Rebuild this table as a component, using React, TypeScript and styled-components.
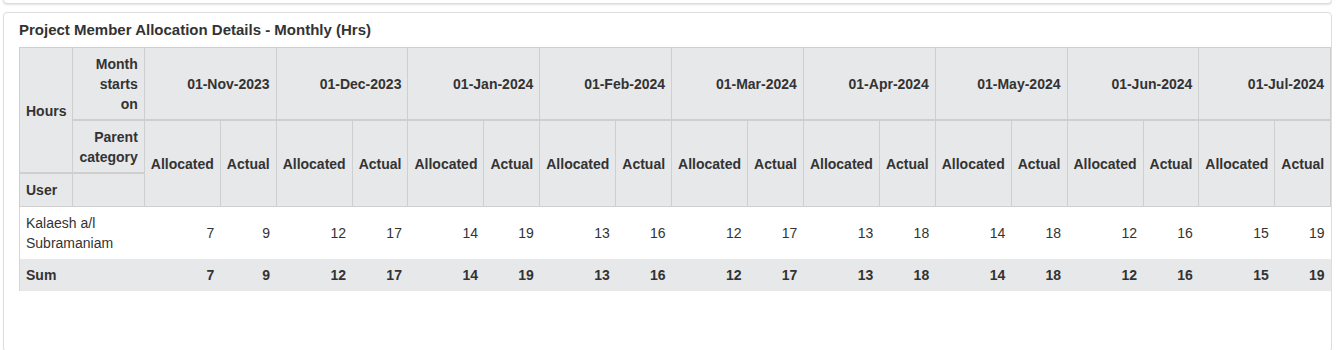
import React from "react";
import styled, { createGlobalStyle } from "styled-components";

const GlobalStyle = createGlobalStyle`
  html, body { margin: 0; padding: 0; background: #ffffff; }
  body {
    font-family: "Liberation Sans", Arial, Helvetica, sans-serif;
    font-size: 14px;
    line-height: 20px;
    color: #333333;
  }
`;

const Page = styled.div`
  width: 1329px;
  padding-left: 3px;
  height: 350px;
  overflow: hidden;
`;

const PrevCard = styled.div`
  height: 30px;
  margin-top: -28px;
  background: #ffffff;
  border: 1px solid #dddddd;
  border-radius: 4px;
  box-shadow: 0 1px 2px rgba(0, 0, 0, 0.12);
`;

const Card = styled.section`
  margin-top: 8px;
  background: #ffffff;
  border: 1px solid #dddddd;
  border-radius: 4px;
  box-shadow: 0 1px 1px rgba(0, 0, 0, 0.05);
  padding: 7px 15px 60px 15px;
  overflow: hidden;
`;

const Title = styled.h3`
  margin: 0 0 7px 0;
  font-size: 15px;
  line-height: 20px;
  font-weight: 700;
  color: #333333;
`;

const Table = styled.table`
  border-collapse: collapse;
  width: 100%;
  border-left: 1px solid #d6d6d6;
  font-size: 14px;
  line-height: 20px;
`;

const Th = styled.th<{ $align?: "left" | "right"; $thick?: boolean }>`
  background: #e7e8ea;
  border: 1px solid #cfcfcf;
  border-bottom-width: ${(p) => (p.$thick ? "2px" : "1px")};
  padding: 6px;
  padding-bottom: ${(p) => (p.$thick ? "5px" : "6px")};
  font-weight: 700;
  color: #333333;
  text-align: ${(p) => p.$align ?? "right"};
  vertical-align: middle;
`;

const Row = styled.tr<{ $total?: boolean }>`
  background: ${(p) => (p.$total ? "#e7e8ea" : "#ffffff")};
  font-weight: ${(p) => (p.$total ? 700 : 400)};
`;

const LabelCell = styled.td`
  padding: 6px;
  text-align: left;
  vertical-align: top;
`;

const NumCell = styled.td`
  padding: 6px;
  text-align: right;
  vertical-align: middle;
`;

type Month = { label: string; allocated: number; actual: number };

const months: Month[] = [
  { label: "01-Nov-2023", allocated: 7, actual: 9 },
  { label: "01-Dec-2023", allocated: 12, actual: 17 },
  { label: "01-Jan-2024", allocated: 14, actual: 19 },
  { label: "01-Feb-2024", allocated: 13, actual: 16 },
  { label: "01-Mar-2024", allocated: 12, actual: 17 },
  { label: "01-Apr-2024", allocated: 13, actual: 18 },
  { label: "01-May-2024", allocated: 14, actual: 18 },
  { label: "01-Jun-2024", allocated: 12, actual: 16 },
  { label: "01-Jul-2024", allocated: 15, actual: 19 },
];

export default function App() {
  return (
    <>
      <GlobalStyle />
      <Page>
        <PrevCard />
        <Card>
          <Title>Project Member Allocation Details - Monthly (Hrs)</Title>
          <Table>
            <thead>
              <tr>
                <Th $align="left" rowSpan={2} $thick>
                  Hours
                </Th>
                <Th $thick>Month starts on</Th>
                {months.map((m) => (
                  <Th key={m.label} colSpan={2} $thick>
                    {m.label}
                  </Th>
                ))}
              </tr>
              <tr>
                <Th $thick>Parent category</Th>
                {months.map((m) => (
                  <React.Fragment key={m.label}>
                    <Th rowSpan={2}>Allocated</Th>
                    <Th rowSpan={2}>Actual</Th>
                  </React.Fragment>
                ))}
              </tr>
              <tr>
                <Th $align="left">User</Th>
                <Th />
              </tr>
            </thead>
            <tbody>
              <Row>
                <LabelCell colSpan={2}>Kalaesh a/l Subramaniam</LabelCell>
                {months.map((m) => (
                  <React.Fragment key={m.label}>
                    <NumCell>{m.allocated}</NumCell>
                    <NumCell>{m.actual}</NumCell>
                  </React.Fragment>
                ))}
              </Row>
              <Row $total>
                <LabelCell colSpan={2}>Sum</LabelCell>
                {months.map((m) => (
                  <React.Fragment key={m.label}>
                    <NumCell>{m.allocated}</NumCell>
                    <NumCell>{m.actual}</NumCell>
                  </React.Fragment>
                ))}
              </Row>
            </tbody>
          </Table>
        </Card>
      </Page>
    </>
  );
}
